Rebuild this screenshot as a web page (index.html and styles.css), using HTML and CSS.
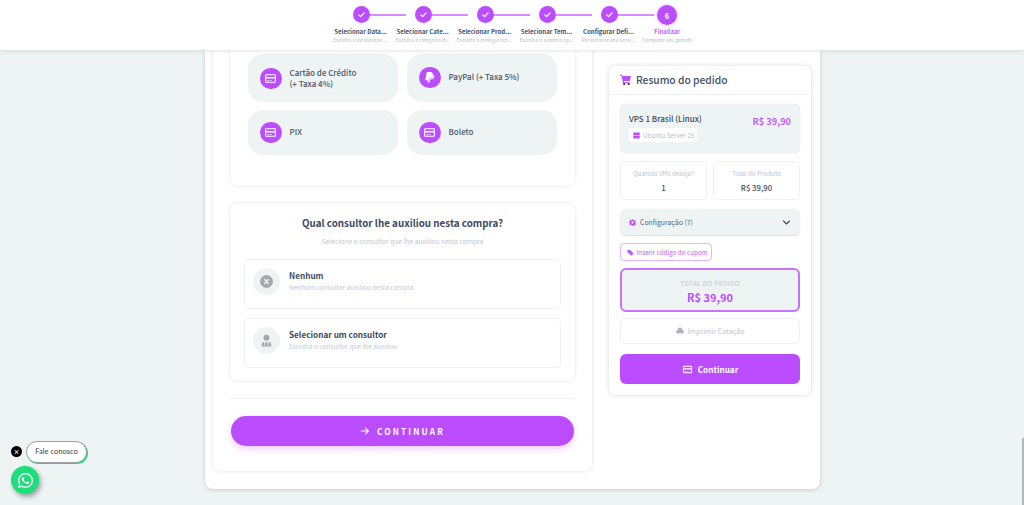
FILE: index.html
```html
<!DOCTYPE html>
<html lang="pt-BR">
<head>
<meta charset="utf-8">
<title>Finalizar pedido</title>
<link rel="stylesheet" href="styles.css">
</head>
<body>
<svg class="defs" width="0" height="0" aria-hidden="true">
  <symbol id="card" viewBox="0 0 24 24"><path fill="currentColor" d="M20 4H4a2 2 0 0 0-2 2v12a2 2 0 0 0 2 2h16a2 2 0 0 0 2-2V6a2 2 0 0 0-2-2zm0 14H4v-6h16v6zm0-9H4V6h16v3zM6 15h4v1.500H6zm5.500 0H14v1.500h-2.500z"/></symbol>
  <symbol id="check" viewBox="0 0 24 24"><path fill="none" stroke="currentColor" stroke-width="3.200" stroke-linecap="round" stroke-linejoin="round" d="M5 13l4.500 4.500L19 7.500"/></symbol>
</svg>

<header class="topbar">
  <ol class="stepper">
    <li class="step done"><span class="dot"><svg class="ico-check"><use href="#check"/></svg></span><strong>Selecionar Data...</strong><small>Escolha a localização ...</small></li>
    <li class="step done"><span class="dot"><svg class="ico-check"><use href="#check"/></svg></span><strong>Selecionar Cate...</strong><small>Escolha a categoria d...</small></li>
    <li class="step done"><span class="dot"><svg class="ico-check"><use href="#check"/></svg></span><strong>Selecionar Prod...</strong><small>Escolha a configuraçã...</small></li>
    <li class="step done"><span class="dot"><svg class="ico-check"><use href="#check"/></svg></span><strong>Selecionar Tem...</strong><small>Escolha o sistema op...</small></li>
    <li class="step done"><span class="dot"><svg class="ico-check"><use href="#check"/></svg></span><strong>Configurar Defi...</strong><small>Personalize seu servi...</small></li>
    <li class="step current"><span class="dot">6</span><strong>Finalizar</strong><small>Complete seu pedido</small></li>
  </ol>
</header>

<main class="shell">
  <section class="left">
    <div class="panel pay">
      <div class="pay-grid">
        <div class="pay-opt tall"><span class="pay-ico"><svg><use href="#card"/></svg></span><span class="pay-text">Cartão de Crédito<br>(+ Taxa 4%)</span></div>
        <div class="pay-opt tall raised"><span class="pay-ico"><svg viewBox="0 0 24 24"><path fill="currentColor" opacity=".75" d="M10 6h6.500c3.300 0 5 1.800 4.600 4.600-.5 3.400-2.800 5.100-5.900 5.100h-2l-.9 5.300H8.200z"/><path fill="currentColor" d="M7 2h6.500c3.300 0 5 1.800 4.600 4.600-.5 3.400-2.800 5.100-5.900 5.100h-2l-.9 5.300H4.200z"/></svg></span><span class="pay-text">PayPal (+ Taxa 5%)</span></div>
        <div class="pay-opt"><span class="pay-ico"><svg><use href="#card"/></svg></span><span class="pay-text">PIX</span></div>
        <div class="pay-opt"><span class="pay-ico"><svg><use href="#card"/></svg></span><span class="pay-text">Boleto</span></div>
      </div>
    </div>

    <div class="panel consult">
      <h2>Qual consultor lhe auxiliou nesta compra?</h2>
      <p class="consult-sub">Selecione o consultor que lhe auxiliou nesta compra</p>
      <div class="cons-item">
        <span class="cons-ico"><svg viewBox="0 0 24 24"><circle cx="12" cy="12" r="12" fill="#a3a8b0"/><path stroke="#eef3f4" stroke-width="2.600" stroke-linecap="round" d="M8.500 8.500l7 7m0-7l-7 7"/></svg></span>
        <div><b>Nenhum</b><small>Nenhum consultor auxiliou nesta compra</small></div>
      </div>
      <div class="cons-item">
        <span class="cons-ico"><svg viewBox="0 0 24 24"><circle cx="12" cy="7" r="5.500" fill="#a3a8b0"/><path fill="#a3a8b0" d="M3 23c0-5 1.500-8 4.500-8.500L9 23zm18 0c0-5-1.500-8-4.500-8.500L15 23zM10 15h4l.7 8H9.300z"/></svg></span>
        <div><b>Selecionar um consultor</b><small>Escolha o consultor que lhe auxiliou</small></div>
      </div>
    </div>

    <hr class="rule">

    <button class="go" type="button"><svg viewBox="0 0 24 24"><path fill="none" stroke="currentColor" stroke-width="2.600" stroke-linecap="round" stroke-linejoin="round" d="M3 12h17m-7-7l7 7-7 7"/></svg>CONTINUAR</button>
  </section>

  <aside class="summary">
    <div class="sum-head">
      <svg viewBox="0 0 24 24"><path fill="currentColor" d="M0 1.500h4.500l.8 3H24l-2.800 11H8.500l.5 2.500h12.500v2.500H7L3 4H0z"/><circle cx="9" cy="22" r="2"/><circle cx="19" cy="22" r="2"/></svg>
      <h3>Resumo do pedido</h3>
    </div>
    <div class="sum-body">
      <div class="product">
        <div>
          <div class="prod-name">VPS 1 Brasil (Linux)</div>
          <span class="os"><svg viewBox="0 0 24 24"><path fill="currentColor" d="M1 2h22v9.500H1zm0 10.500h22V22H1z"/></svg>Ubuntu Server 25</span>
        </div>
        <div class="prod-price">R$ 39,90</div>
      </div>
      <div class="stats">
        <div class="stat"><small>Quantas VMs deseja?</small><b>1</b></div>
        <div class="stat"><small>Total do Produto</small><b>R$ 39,90</b></div>
      </div>
      <div class="config">
        <svg class="gear" viewBox="0 0 24 24"><path fill="currentColor" fill-rule="evenodd" d="M10 1h4l.7 3.200 2 .8L19.500 3.300l2.800 2.800L20.400 9l.8 2 2.800.7v4l-2.800.6-.8 2 1.900 2.500-2.800 2.700-2.800-1.800-2 .8L14 23h-4l-.7-2.900-2-.8-2.800 1.800-2.800-2.800 1.900-2.500-.8-2L0 14v-3l2.800-.7.800-2-1.900-2.200 2.800-2.800L7.300 5l2-.8zM12 8a4 4 0 1 0 0 8 4 4 0 0 0 0-8z"/></svg>
        <span>Configuração (7)</span>
        <svg class="chev" viewBox="0 0 24 24"><path fill="none" stroke="currentColor" stroke-width="3" stroke-linecap="round" stroke-linejoin="round" d="M4 8l8 8 8-8"/></svg>
      </div>
      <button class="coupon" type="button"><svg viewBox="0 0 24 24"><path fill="currentColor" d="M1 3h10l12 12-8 8L1 11z"/></svg>Inserir código do cupom</button>
      <div class="total"><small>TOTAL DO PEDIDO</small><b>R$ 39,90</b></div>
      <button class="print" type="button"><svg viewBox="0 0 24 24"><path fill="currentColor" d="M6 2h12v6H6zM3 9h18a2 2 0 0 1 2 2v7h-4v4H5v-4H1v-7a2 2 0 0 1 2-2zm4 8v3h10v-3z"/></svg>Imprimir Cotação</button>
      <button class="buy" type="button"><svg><use href="#card"/></svg>Continuar</button>
    </div>
  </aside>
</main>

<div class="chat">
  <div class="chat-row"><span class="chat-x">×</span><span class="chat-pill">Fale conosco</span></div>
  <span class="chat-btn"><svg viewBox="0 0 16 16"><path fill="currentColor" d="M13.601 2.326A7.854 7.854 0 0 0 7.994 0C3.627 0 .068 3.558.064 7.926c0 1.399.366 2.760 1.057 3.965L0 16l4.204-1.102a7.933 7.933 0 0 0 3.790.965h.004c4.368 0 7.926-3.558 7.930-7.930A7.898 7.898 0 0 0 13.600 2.326zM7.994 14.521a6.573 6.573 0 0 1-3.356-.920l-.240-.144-2.494.654.666-2.433-.156-.251a6.560 6.560 0 0 1-1.007-3.505c0-3.626 2.957-6.584 6.591-6.584a6.560 6.560 0 0 1 4.660 1.931 6.557 6.557 0 0 1 1.928 4.660c-.004 3.639-2.961 6.592-6.592 6.592zm3.615-4.934c-.197-.099-1.170-.578-1.353-.646-.182-.065-.315-.099-.445.099-.133.197-.513.646-.627.775-.114.133-.232.148-.430.050-.197-.100-.836-.308-1.592-.985-.590-.525-.985-1.175-1.103-1.372-.114-.198-.011-.304.088-.403.087-.088.197-.232.296-.346.100-.114.133-.198.198-.330.065-.134.034-.248-.015-.347-.050-.099-.445-1.076-.612-1.470-.160-.389-.323-.335-.445-.340-.114-.007-.247-.007-.380-.007a.729.729 0 0 0-.529.247c-.182.198-.691.677-.691 1.654 0 .977.710 1.916.810 2.049.098.133 1.394 2.132 3.383 2.992.470.205.840.326 1.129.418.475.152.904.129 1.246.080.380-.058 1.171-.480 1.338-.943.164-.464.164-.860.114-.943-.049-.084-.182-.133-.380-.232z"/></svg></span>
</div>
<div class="scrollthumb"></div>
</body>
</html>
```
FILE: styles.css
```css
* { box-sizing: border-box; }
html, body { margin: 0; height: 505px; overflow: hidden; }
body { background: #eef4f4; font-family: "Noto Sans CJK SC", "Noto Sans", sans-serif; color: #3f4d63; position: relative; }
.defs { position: absolute; }
small, b, strong { display: block; }
h2, h3, p, ol { margin: 0; padding: 0; }
button { font-family: inherit; border: 0; cursor: pointer; }

/* top stepper */
.topbar { height: 50px; background: #fff; box-shadow: 0 1px 4px rgba(40,50,70,.13); position: relative; z-index: 2; padding-left: 330px; }
.stepper { display: flex; list-style: none; padding-top: 5px; }
.step { width: 62px; display: flex; flex-direction: column; align-items: center; position: relative; text-align: center; }
.step.current { width: 54px; }
.step.done::after { content: ""; position: absolute; left: 39px; top: 9px; width: 37px; height: 2px; background: #d98bff; }
.dot { width: 17px; height: 17px; margin-top: 1px; border-radius: 50%; background: #bb4dff; color: #fff; display: flex; align-items: center; justify-content: center; position: relative; z-index: 1; font-size: 7.500px; font-weight: 700; }
.current .dot { width: 20px; height: 20px; margin-top: 0; box-shadow: 0 0 4px rgba(187,77,255,.35); }
.ico-check { width: 9px; height: 9px; }
.step strong { margin-top: 4px; margin-right: 1px; font-size: 6.050px; line-height: 9px; font-weight: 700; white-space: nowrap; color: #445066; }
.current strong { margin-top: 2px; margin-right: 0; color: #c05cff; }
.step small { margin-right: 1px; font-size: 5.080px; line-height: 8px; white-space: nowrap; color: #b9bfc8; }
.current small { margin-right: 0; }

/* page shell */
.shell { width: 615px; height: 439px; margin-left: 205px; padding: 0 9px 18px 8px; background: #fff; border-radius: 0 0 8px 8px; box-shadow: 0 1px 4px rgba(40,50,70,.2); display: flex; gap: 17px; align-items: flex-start; }
.left { width: 379px; height: 421px; padding: 0 17px; border-radius: 0 0 8px 8px; box-shadow: 0 0 4px rgba(60,70,100,.16); }
.panel { border-radius: 8px; box-shadow: 0 0 3px rgba(60,70,100,.18); }

.pay { height: 136px; padding: 4px 18px 0; border-radius: 0 0 8px 8px; }
.pay-grid { display: grid; grid-template-columns: 150px 150px; grid-template-rows: 48px 45px; gap: 8px 9px; }
.pay-opt { display: flex; align-items: center; gap: 8px; padding-left: 12px; background: #eef3f4; border-radius: 15px; font-size: 8px; line-height: 11px; font-weight: 500; color: #4a566a; }
.pay-text { margin-bottom: 2px; }
.tall { padding-top: 1px; }
.raised .pay-text { margin-bottom: 4px; }
.raised .pay-ico { margin-bottom: 2px; }
.pay-ico { width: 21.500px; height: 21.500px; flex: none; border-radius: 50%; background: #bb4dff; color: #fff; display: flex; align-items: center; justify-content: center; }
.pay-ico svg { width: 13px; height: 13px; }

.consult { height: 178px; margin-top: 17px; padding: 13px 14px 14px; }
.consult h2 { text-align: center; font-size: 9.800px; line-height: 15px; font-weight: 700; color: #3c4a60; }
.consult-sub { margin-top: 5px; margin-bottom: 12px; text-align: center; font-size: 6.700px; line-height: 11px; color: #c0c6cf; }
.cons-item { height: 50px; padding: 8px 8px 0; margin-bottom: 8px; display: flex; gap: 9px; border-radius: 4px; border: 1px solid #eff1f3; }
.cons-item + .cons-item { margin-top: 9px; }
.cons-ico { width: 27px; height: 27px; flex: none; border-radius: 50%; background: #eef3f4; display: flex; align-items: center; justify-content: center; }
.cons-ico svg { width: 13px; height: 13px; }
.cons-item b { margin-top: 1px; font-size: 8.200px; line-height: 12px; font-weight: 700; color: #3c4a60; }
.cons-item small { margin-top: 1px; font-size: 6.500px; line-height: 11px; color: #c4c9d1; }

.rule { margin: 17px 0 17px; height: 1px; border: 0; background: #eef0f2; }
.go { display: flex; align-items: center; justify-content: center; gap: 7px; width: 343px; height: 30px; margin-left: 1px; border-radius: 15px; background: #bb4dff; color: #fff; font-size: 8.200px; font-weight: 700; letter-spacing: 2.200px; box-shadow: 0 3px 7px rgba(187,77,255,.28); }
.go svg { width: 10px; height: 10px; }

/* summary */
.summary { width: 202px; height: 329px; margin-top: 16px; border-radius: 6px; background: #fff; box-shadow: 0 0 5px rgba(60,70,100,.2); }
.sum-head { height: 29px; display: flex; align-items: center; gap: 5px; padding: 0 0 1px 11px; border-bottom: 1px solid #eef0f2; color: #bb4dff; }
.sum-head svg { width: 11px; height: 11px; }
.sum-head h3 { font-size: 10.250px; font-weight: 500; color: #445066; }
.sum-body { padding: 9px 11px 0; display: flex; flex-direction: column; }
.product { height: 49px; padding: 9px 9px 0; display: flex; justify-content: space-between; background: #eef3f4; border-radius: 6px; box-shadow: 0 0 1px rgba(60,70,100,.3); }
.prod-name { font-size: 8px; line-height: 11px; font-weight: 500; color: #3c4a60; }
.os { display: flex; align-items: center; gap: 3px; width: 68px; height: 14px; margin-top: 4px; padding-left: 4px; background: #fff; border-radius: 3px; font-size: 6.300px; color: #b9bfc8; white-space: nowrap; }
.os svg { width: 7px; height: 7px; color: #bb4dff; }
.prod-price { margin-top: 1px; font-size: 9.200px; line-height: 14px; font-weight: 700; color: #c05cff; }
.stats { display: grid; grid-template-columns: 1fr 1fr; gap: 6px; margin-top: 8px; }
.stat { height: 39px; padding-top: 6px; text-align: center; border-radius: 4px; border: 1px solid #eff1f3; }
.stat small { font-size: 6.300px; line-height: 12px; color: #bfc5ce; }
.stat b { margin-top: 2px; font-size: 7.800px; line-height: 12px; font-weight: 500; color: #445066; }
.config { height: 26px; margin-top: 9px; padding: 0 9px; display: flex; align-items: center; background: #eef3f4; border-radius: 6px; box-shadow: 0 1px 1px rgba(60,70,100,.18); font-size: 6.900px; color: #5c6778; }
.gear { width: 7px; height: 7px; margin-right: 4px; color: #bb4dff; }
.chev { width: 9px; height: 9px; margin-left: auto; color: #3c4a60; }
.coupon { width: 92px; height: 18px; margin-top: 8px; padding: 0 0 0 6px; display: flex; align-items: center; gap: 2.500px; background: #fff; border: 1px solid #e0b4ff; border-radius: 4px; font-size: 6.300px; color: #c05cff; white-space: nowrap; }
.coupon svg { width: 7px; height: 7px; }
.total { height: 44px; margin-top: 7px; padding-top: 7.500px; text-align: center; background: #eef3f4; border: 2px solid #c872ff; border-radius: 6px; }
.total small { font-size: 6.300px; line-height: 11px; letter-spacing: .4px; color: #c0c5cc; }
.total b { margin-top: 1px; font-size: 11px; line-height: 15px; font-weight: 700; color: #bb4dff; }
.print { height: 26px; margin-top: 6px; display: flex; align-items: center; justify-content: center; gap: 4px; background: #fff; border-radius: 6px; border: 1px solid #eff1f3; font-size: 7px; color: #c0c5cc; }
.print svg { width: 8px; height: 8px; color: #a9afb8; }
.buy { height: 30px; margin-top: 10px; display: flex; align-items: center; justify-content: center; gap: 5px; background: #bb4dff; color: #fff; border-radius: 6px; font-size: 8.200px; font-weight: 700; }
.buy svg { width: 11px; height: 11px; }

/* floating items */
.chat { position: absolute; left: 11px; top: 441px; display: flex; flex-direction: column; }
.chat-row { display: flex; align-items: center; gap: 4px; }
.chat-x { width: 11px; height: 11px; margin-bottom: 2px; border-radius: 50%; background: #000; color: #fff; font-size: 6px; line-height: 11px; text-align: center; font-weight: 700; }
.chat-pill { width: 61px; height: 22px; border: 1px solid #9aa0a6; border-radius: 11px; background: #fff; box-shadow: 1px 1px 0 #1ede7c; font-family: Lato, sans-serif; font-size: 7.500px; line-height: 20px; text-align: center; color: #444; }
.chat-btn { width: 28px; height: 28px; margin-top: 3px; border-radius: 50%; background: #1ede7c; color: #fff; display: flex; align-items: center; justify-content: center; box-shadow: 2px 3px 5px rgba(0,0,0,.35); }
.chat-btn svg { width: 15px; height: 15px; }
.scrollthumb { position: absolute; right: 0; top: 438px; width: 2px; height: 67px; background: #b3b8b8; }
```
